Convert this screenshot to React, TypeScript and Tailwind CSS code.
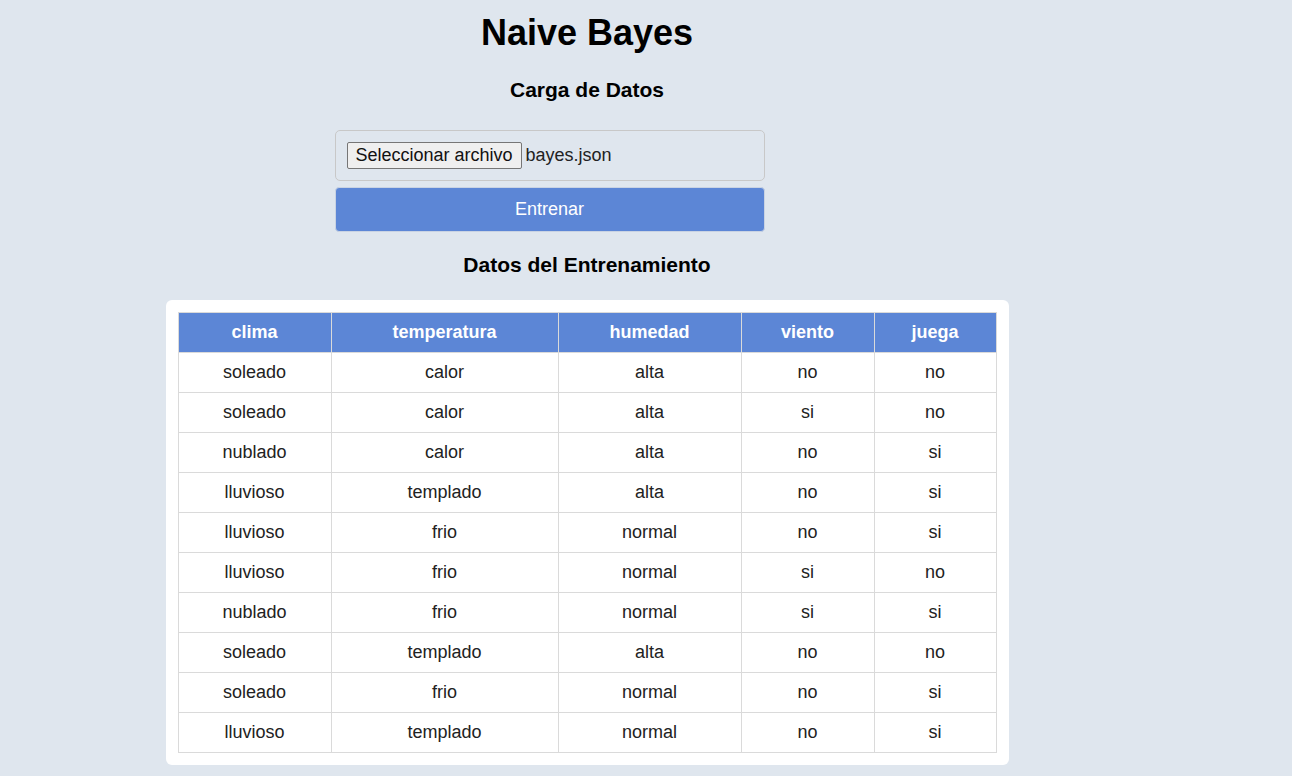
import { useState } from 'react'

const columns = ['clima', 'temperatura', 'humedad', 'viento', 'juega']
const widths = ['w-[153px]', 'w-[227px]', 'w-[183px]', 'w-[133px]', 'w-[122px]']

const rows = [
  ['soleado', 'calor', 'alta', 'no', 'no'],
  ['soleado', 'calor', 'alta', 'si', 'no'],
  ['nublado', 'calor', 'alta', 'no', 'si'],
  ['lluvioso', 'templado', 'alta', 'no', 'si'],
  ['lluvioso', 'frio', 'normal', 'no', 'si'],
  ['lluvioso', 'frio', 'normal', 'si', 'no'],
  ['nublado', 'frio', 'normal', 'si', 'si'],
  ['soleado', 'templado', 'alta', 'no', 'no'],
  ['soleado', 'frio', 'normal', 'no', 'si'],
  ['lluvioso', 'templado', 'normal', 'no', 'si'],
]

export default function App() {
  const [fileName] = useState('bayes.json')

  return (
    <div className="min-h-screen bg-[#dfe6ee] font-['Liberation_Sans',Arial,sans-serif]">
      <div className="w-[1174px] flex flex-col items-center pt-[12px]">
        <h1 className="text-[36px] leading-[41px] font-bold text-black">Naive Bayes</h1>
        <h3 className="mt-[25px] text-[21px] leading-[24px] font-bold text-black">Carga de Datos</h3>

        {/* upload form, sits a bit left of the page axis */}
        <div className="mt-[28px] mr-[75px] w-[430px] flex flex-col gap-[6px]">
          <label className="h-[51px] flex items-center gap-[4px] px-[11px] border border-[#c8c8c8] rounded-[5px] text-[18px] text-[#222] cursor-pointer">
            <span className="px-[8px] h-[27px] leading-[25px] bg-[#efefef] border border-[#767676] rounded-[2px] text-[#111]">
              Seleccionar archivo
            </span>
            <span>{fileName}</span>
          </label>
          <button className="h-[45px] w-full bg-[#5c86d6] text-white text-[18px] rounded-[4px] border border-[#c9d3e3]">
            Entrenar
          </button>
        </div>

        <h3 className="mt-[21px] text-[21px] leading-[24px] font-bold text-black">Datos del Entrenamiento</h3>

        <div className="mt-[23px] bg-white rounded-[6px] p-[12px]">
          <table className="border-collapse text-[18px] text-center">
            <thead>
              <tr className="bg-[#5c86d6] text-white">
                {columns.map((c, i) => (
                  <th key={c} className={`${widths[i]} h-[40px] border border-[#dadada] font-bold`}>
                    {c}
                  </th>
                ))}
              </tr>
            </thead>
            <tbody>
              {rows.map((r, i) => (
                <tr key={i} className="text-[#222]">
                  {r.map((v, j) => (
                    <td key={j} className="h-[40px] border border-[#dadada]">
                      {v}
                    </td>
                  ))}
                </tr>
              ))}
            </tbody>
          </table>
        </div>
      </div>
    </div>
  )
}
